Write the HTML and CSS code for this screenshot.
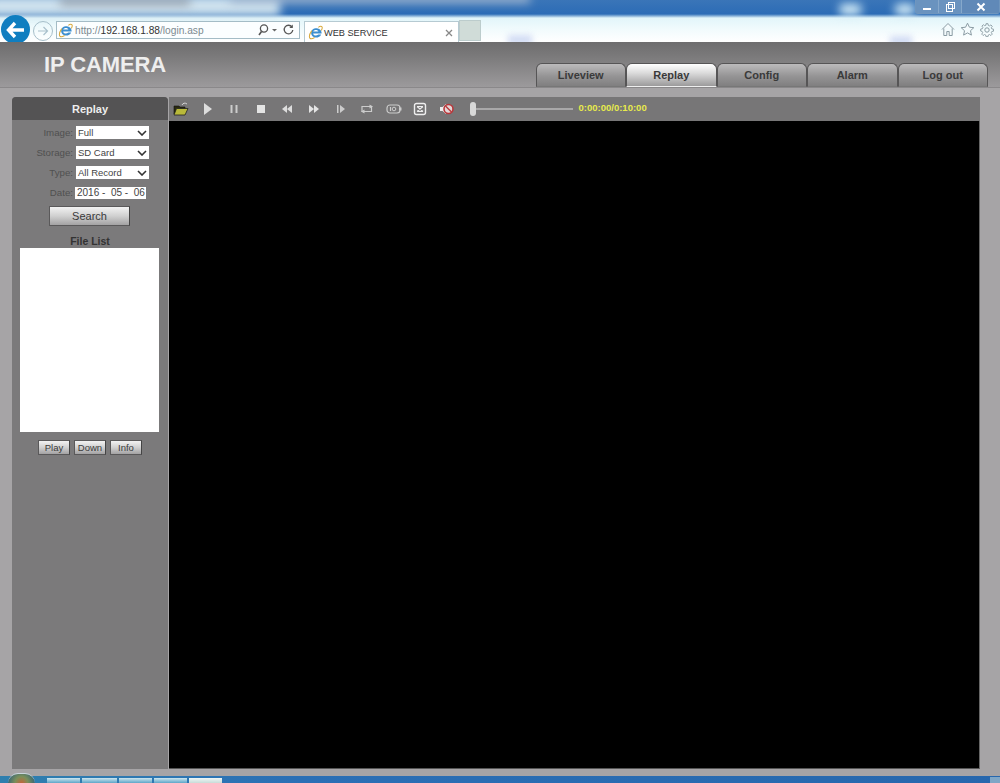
FILE: index.html
```html
<!DOCTYPE html>
<html lang="en">
<head>
  <meta charset="UTF-8">
  <title>WEB SERVICE</title>
  <link rel="stylesheet" href="styles.css">
</head>
<body>
  <div class="browser">
    <div class="blob blob-a"></div>
    <div class="blob blob-b"></div>
    <div class="blob blob-c"></div>
    <div class="blob blob-d"></div>
    <div class="blob blob-e"></div>
    <div class="blob blob-f"></div>
    <div class="window-btns">
      <span class="win-btn min"><svg width="10" height="10" viewBox="0 0 10 10"><rect x="1" y="6" width="8" height="2" fill="#fff"/></svg></span>
      <span class="win-btn restore"><svg width="10" height="10" viewBox="0 0 10 10"><rect x="1.500" y="2.500" width="6" height="7" fill="none" stroke="#fff"/><rect x="3.500" y="0.500" width="6" height="6" fill="none" stroke="#fff"/></svg></span>
      <span class="win-btn close"><svg width="10" height="10" viewBox="0 0 10 10"><path d="M1.500 1.500l7 7M8.500 1.500l-7 7" stroke="#fff" stroke-width="2"/></svg></span>
    </div>
    <div class="navbar">
      <span class="back-btn"><svg width="20" height="18" viewBox="0 0 20 18"><path d="M9 2L2.500 9 9 16M3 9h15" fill="none" stroke="#fff" stroke-width="3.400"/></svg></span>
      <span class="forward-btn"><svg width="12" height="12" viewBox="0 0 12 12"><path d="M6.500 2L10.500 6 6.500 10M10 6H1" fill="none" stroke="#a9c0cc" stroke-width="1.200"/></svg></span>
      <div class="address">
        <svg class="ie-icon" width="15" height="15" viewBox="0 0 16 16"><use href="#ie"/></svg>
        <span class="url"><span class="dim">http://</span>192.168.1.88<span class="dim">/login.asp</span></span>
        <svg class="addr-tools" width="38" height="14" viewBox="0 0 38 14"><circle cx="6" cy="5.500" r="3.600" fill="none" stroke="#555" stroke-width="1.300"/><path d="M3.500 8.500L1 12" stroke="#555" stroke-width="1.600"/><path d="M14 6h5l-2.500 2.500z" fill="#666"/><path d="M34 4a4.300 4.300 0 1 0 .8 3" fill="none" stroke="#555" stroke-width="1.300"/><path d="M34.800 1.500v3.500h-3.500z" fill="#555"/></svg>
      </div>
      <div class="browser-tab">
        <svg class="ie-icon" width="15" height="15" viewBox="0 0 16 16"><use href="#ie"/></svg>
        <span class="tab-title">WEB SERVICE</span>
        <svg width="8" height="8" viewBox="0 0 8 8"><path d="M1 1l6 6M7 1L1 7" stroke="#888" stroke-width="1.300"/></svg>
      </div>
      <div class="new-tab"></div>
      <div class="browser-tools">
        <svg width="14" height="15" viewBox="0 0 14 15"><path d="M1 7.500L7 1.500l6 6M2.800 6.500V13.500h3v-4h2.400v4h3V6.500" fill="#f4fbfd" stroke="#8a9ba3"/></svg>
        <svg width="15" height="15" viewBox="0 0 15 15"><path d="M7.500 1.200l1.900 4 4.400.5-3.300 3 .9 4.400-3.900-2.200-3.900 2.200.9-4.400-3.300-3 4.400-.5z" fill="#f4fbfd" stroke="#8a9ba3"/></svg>
        <svg width="14" height="14" viewBox="0 0 14 14"><circle cx="7" cy="7" r="2.200" fill="none" stroke="#8a9ba3"/><path d="M6 .7h2l.3 1.700 1.200.5 1.400-1 1.400 1.400-1 1.400.5 1.200 1.700.3v2l-1.700.3-.5 1.200 1 1.400-1.400 1.400-1.400-1-1.200.5-.3 1.700H6l-.3-1.700-1.200-.5-1.400 1-1.400-1.400 1-1.400-.5-1.200L.7 8V6l1.700-.3.5-1.200-1-1.400 1.400-1.400 1.400 1 1.200-.5z" fill="none" stroke="#8a9ba3" stroke-width=".9"/></svg>
      </div>
    </div>
  </div>

  <header class="cam-header">
    <h1>IP CAMERA</h1>
    <nav class="tabs">
      <a class="tab">Liveview</a>
      <a class="tab active">Replay</a>
      <a class="tab">Config</a>
      <a class="tab">Alarm</a>
      <a class="tab">Log out</a>
    </nav>
  </header>

  <main class="content">
    <aside class="panel">
      <div class="panel-title">Replay</div>
      <div class="form">
        <div class="form-row">
          <span class="form-label">Image:</span>
          <span class="select">Full<svg width="10" height="6" viewBox="0 0 10 6"><use href="#chev"/></svg></span>
        </div>
        <div class="form-row">
          <span class="form-label">Storage:</span>
          <span class="select">SD Card<svg width="10" height="6" viewBox="0 0 10 6"><use href="#chev"/></svg></span>
        </div>
        <div class="form-row">
          <span class="form-label">Type:</span>
          <span class="select">All Record<svg width="10" height="6" viewBox="0 0 10 6"><use href="#chev"/></svg></span>
        </div>
        <div class="form-row">
          <span class="form-label">Date:</span>
          <span class="date-input">2016 -&nbsp; 05 -&nbsp; 06</span>
        </div>
      </div>
      <button class="btn search-btn">Search</button>
      <div class="list-title">File List</div>
      <div class="file-list"></div>
      <div class="list-actions">
        <button class="btn small-btn">Play</button>
        <button class="btn small-btn">Down</button>
        <button class="btn small-btn">Info</button>
      </div>
    </aside>

    <section class="player">
      <div class="toolbar">
        <svg class="tool" width="16" height="14" viewBox="0 0 16 14"><path d="M1 4h5l1 1h5v2H4L1 12z" fill="#2a2a10" stroke="#111" stroke-width=".6"/><path d="M3.500 6.500H15L12 13H1z" fill="#b9b93a" stroke="#222" stroke-width=".8"/><path d="M9 3c1-2 3-2.500 5-1" fill="none" stroke="#eee" stroke-width=".8"/></svg>
        <svg class="tool" width="16" height="14" viewBox="0 0 16 14"><path d="M4 1l8 6-8 6z" fill="#ddd"/></svg>
        <svg class="tool" width="16" height="14" viewBox="0 0 16 14"><rect x="4.500" y="3" width="2" height="8" fill="#ccc"/><rect x="9.500" y="3" width="2" height="8" fill="#ccc"/></svg>
        <svg class="tool" width="16" height="14" viewBox="0 0 16 14"><rect x="4" y="3" width="8" height="8" fill="#e4e4e4"/></svg>
        <svg class="tool" width="16" height="14" viewBox="0 0 16 14"><path d="M8 3v8L3 7zM13 3v8L8 7z" fill="#ddd"/></svg>
        <svg class="tool" width="16" height="14" viewBox="0 0 16 14"><path d="M3 3v8l5-4zM8 3v8l5-4z" fill="#e4e4e4"/></svg>
        <svg class="tool" width="16" height="14" viewBox="0 0 16 14"><rect x="4" y="3" width="1.500" height="8" fill="#ccc"/><path d="M7 3v8l5-4z" fill="#ccc"/></svg>
        <svg class="tool" width="16" height="14" viewBox="0 0 16 14"><path d="M3 4.500h9.500v5H3z" fill="none" stroke="#ccc" stroke-width="1.200"/><path d="M10.500 2.500l3.500 2-3.500 2zM5.500 7.500L2 9.500l3.500 2z" fill="#ccc"/></svg>
        <svg class="tool" width="16" height="14" viewBox="0 0 16 14"><rect x="1" y="3" width="13" height="8" rx="3" fill="none" stroke="#ccc" stroke-width="1.200"/><path d="M4.500 5v4" stroke="#ccc" stroke-width="1.200"/><circle cx="8" cy="7" r="1.800" fill="none" stroke="#ccc"/><path d="M13 5.500h2.500v3H13" fill="#ccc"/></svg>
        <svg class="tool" width="16" height="14" viewBox="0 0 16 14"><rect x="2.500" y="1.500" width="11" height="11" rx="2" fill="none" stroke="#eee" stroke-width="1.400"/><path d="M5 4.500h6M5 9.500h6M5 4.500l6 5M11 4.500l-6 5" fill="none" stroke="#eee" stroke-width="1.100"/></svg>
        <svg class="tool" width="16" height="14" viewBox="0 0 16 14"><path d="M1 5h2.500L7 2v10L3.500 9H1z" fill="#eee"/><circle cx="9.500" cy="7" r="4.500" fill="#e4d8d8" stroke="#b8383c" stroke-width="1.600"/><path d="M6.500 4l6 6" stroke="#b8383c" stroke-width="1.400"/></svg>
        <div class="slider">
          <span class="slider-thumb"></span>
          <span class="slider-track"></span>
        </div>
        <span class="time">0:00:00/0:10:00</span>
      </div>
      <div class="video"></div>
    </section>
  </main>

  <footer class="taskbar">
    <span class="orb"></span>
    <span class="task-item w33"></span>
    <span class="task-item w35"></span>
    <span class="task-item w33"></span>
    <span class="task-item w33"></span>
    <span class="task-item w33 light"></span>
    <span class="task-end"></span>
  </footer>

  <svg class="defs" width="0" height="0">
    <symbol id="ie" viewBox="0 0 16 16">
      <path d="M14.500 9H5.500c.3 2.400 3.600 3 5.500 1h3c-1.500 4-7.500 4.500-9.800 1.200C2 8 4.500 3.500 8 3.500c3.800 0 6.800 2 6.500 5.500zM5.600 7h5.400C10.700 4.800 6.200 4.800 5.600 7z" fill="#3d8fd0"/>
      <path d="M11 2.500c2-1.500 4-1.500 4.200.3.100 1-.4 2-1 3M4 6C2 9 1 12.500 2 14c1 1.200 3.200.5 5-.7" fill="none" stroke="#d8a93a" stroke-width="1.100"/>
    </symbol>
    <symbol id="chev" viewBox="0 0 10 6">
      <path d="M1 1l4 4 4-4" fill="none" stroke="#333" stroke-width="1.600"/>
    </symbol>
  </svg>
</body>
</html>
```
FILE: styles.css
```css
:root {
  --page-bg: #a6a4a6;
  --panel: #7b7a7b;
  --panel-dark: #545354;
  --toolbar: #777677;
  --label: #505050;
}
html, body {
  margin: 0;
  padding: 0;
}
body {
  display: flex;
  flex-direction: column;
  width: 1000px;
  height: 783px;
  overflow: hidden;
  background: var(--page-bg);
  font-family: "Liberation Sans", Arial, sans-serif;
}
.defs {
  position: absolute;
}

/* BROWSER CHROME */
.browser {
  position: relative;
  height: 42px;
  flex: none;
  overflow: hidden;
  background: linear-gradient(180deg, #3a75b8 0, #2c6cb6 14px, #e2f5fa 18px, #f2fbfd 30px, #ffffff 42px);
}
.blob {
  position: absolute;
  filter: blur(5px);
}
.blob-a {
  left: -10px;
  top: -4px;
  width: 290px;
  height: 20px;
  background: #cfe2ee;
}
.blob-b {
  left: 60px;
  top: -2px;
  width: 130px;
  height: 7px;
  background: #8f99a5;
}
.blob-c {
  left: 230px;
  top: -6px;
  width: 300px;
  height: 9px;
  background: #9fb5cf;
}
.blob-d {
  left: 840px;
  top: 4px;
  width: 90px;
  height: 11px;
  background: radial-gradient(circle at 10% 50%, #d6eef8 12%, transparent 18%), radial-gradient(circle at 72% 50%, #d6eef8 12%, transparent 18%);
}
.blob-e {
  left: 508px;
  top: 35px;
  width: 24px;
  height: 10px;
  background: #d2dcf4;
  filter: blur(3px);
}
.blob-f {
  left: 890px;
  top: 36px;
  width: 22px;
  height: 10px;
  background: #d2dcf4;
  filter: blur(3px);
}
.window-btns {
  position: absolute;
  right: 0;
  top: 0;
  display: flex;
  height: 13px;
  width: 83px;
  border: 1px solid #6f95bd;
  border-top: none;
  border-radius: 0 0 3px 3px;
  background: #6a93bf;
}
.win-btn {
  display: flex;
  align-items: center;
  justify-content: center;
  width: 22px;
  border-right: 1px solid #86a8cb;
}
.win-btn.close {
  flex: 1;
  border-right: none;
  background: #6089b8;
}
.navbar {
  position: absolute;
  left: 0;
  right: 0;
  top: 15px;
  height: 29px;
  display: flex;
  align-items: flex-start;
}
.back-btn {
  display: flex;
  align-items: center;
  justify-content: center;
  flex: none;
  width: 29px;
  height: 29px;
  margin-left: 1px;
  border-radius: 50%;
  background: #0f7ec0;
}
.forward-btn {
  display: flex;
  align-items: center;
  justify-content: center;
  flex: none;
  width: 18px;
  height: 18px;
  margin: 6px 0 0 3px;
  border: 1px solid #a7bfca;
  border-radius: 50%;
}
.address {
  display: flex;
  align-items: center;
  flex: none;
  box-sizing: border-box;
  width: 244px;
  height: 18px;
  margin: 6px 0 0 3px;
  padding: 0 3px 0 1px;
  border: 1px solid #a4bcc6;
  background: #fbfeff;
  font-size: 10.2px;
  color: #333;
}
.url {
  margin-left: 2px;
  flex: 1;
}
.dim {
  color: #7d8a90;
}
.browser-tab {
  display: flex;
  align-items: center;
  flex: none;
  box-sizing: border-box;
  width: 155px;
  height: 22px;
  margin: 6px 0 0 4px;
  padding: 0 5px 0 3px;
  border: 1px solid #b6cad2;
  border-bottom: none;
  background: #fff;
  font-size: 9.2px;
  color: #333;
}
.tab-title {
  margin-left: 1px;
  flex: 1;
}
.new-tab {
  flex: none;
  box-sizing: border-box;
  width: 22px;
  height: 21px;
  margin: 5px 0 0 0;
  border: 1px solid #bccccc;
  background: #d0dcd8;
}
.browser-tools {
  display: flex;
  align-items: center;
  gap: 5px;
  margin: 7px 0 0 auto;
  padding-right: 6px;
}

/* HEADER */
.cam-header {
  display: flex;
  flex: none;
  justify-content: space-between;
  align-items: flex-start;
  box-sizing: border-box;
  height: 46px;
  padding: 0 12px 0 44px;
  border-bottom: 1px solid #8a888a;
  background: linear-gradient(180deg, #6e6d6e 0%, #7a797a 30%, #9c9a9c 100%);
}
h1 {
  margin: 10px 0 0;
  font-size: 22px;
  line-height: 26px;
  letter-spacing: -.1px;
  color: #eee;
}
.tabs {
  display: flex;
  margin-top: 21px;
}
.tab {
  display: flex;
  align-items: center;
  justify-content: center;
  box-sizing: border-box;
  width: 90.5px;
  height: 24px;
  border: 1px solid #565556;
  border-bottom-color: #777;
  border-radius: 6px 6px 0 0;
  background: linear-gradient(180deg, #bcbbbc 0%, #959495 55%, #807f80 100%);
  font-size: 11px;
  font-weight: bold;
  color: #3a3a3a;
}
.tab.active {
  border-bottom-color: #eee;
  background: linear-gradient(180deg, #ffffff 0%, #dcdcdc 40%, #9b9a9b 100%);
}

/* MAIN */
.content {
  display: flex;
  flex: none;
  height: 672px;
  margin: 9px 20px 7px 12px;
  gap: 1px;
}
.panel {
  display: flex;
  flex-direction: column;
  align-items: center;
  flex: none;
  width: 156px;
  border-radius: 4px 4px 0 0;
  background: var(--panel);
}
.panel-title {
  align-self: stretch;
  height: 23px;
  line-height: 24px;
  border-radius: 4px 4px 0 0;
  background: var(--panel-dark);
  text-align: center;
  font-size: 11px;
  font-weight: bold;
  color: #eee;
}
.form {
  display: flex;
  flex-direction: column;
  align-self: stretch;
  gap: 7px;
  padding-top: 6px;
}
.form-row {
  display: flex;
  align-items: center;
  height: 13px;
  gap: 3px;
}
.form-label {
  width: 61px;
  text-align: right;
  font-size: 9.7px;
  color: var(--label);
}
.select {
  display: flex;
  align-items: center;
  justify-content: space-between;
  box-sizing: border-box;
  width: 73px;
  height: 13px;
  padding: 0 2px;
  background: #fff;
  font-size: 9.5px;
  color: #444;
}
.date-input {
  box-sizing: border-box;
  width: 71px;
  height: 12px;
  line-height: 12px;
  margin-left: -1px;
  padding-left: 2px;
  background: #fff;
  font-size: 10px;
  white-space: nowrap;
  color: #444;
}
.btn {
  padding: 0;
  border: 1px solid #5a595a;
  border-right-color: #444;
  background: linear-gradient(180deg, #f2f2f2 0%, #d0d0d0 50%, #a3a2a3 100%);
  font-family: inherit;
  font-size: 11px;
  color: #3a3a3a;
}
.search-btn {
  width: 81px;
  height: 20px;
  margin: 7px 1px 0 0;
}
.list-title {
  margin-top: 9px;
  height: 13px;
  line-height: 13px;
  font-size: 10.5px;
  font-weight: bold;
  color: #333;
}
.file-list {
  width: 139px;
  height: 184px;
  margin-right: 1px;
  background: #fff;
}
.list-actions {
  display: flex;
  gap: 4px;
  margin-top: 8px;
}
.small-btn {
  width: 32px;
  height: 15px;
  font-size: 9.5px;
  line-height: 13px;
}

/* PLAYER */
.player {
  display: flex;
  flex-direction: column;
  flex: 1;
}
.toolbar {
  display: flex;
  align-items: center;
  flex: none;
  gap: 10.6px;
  height: 24px;
  padding-left: 4px;
  background: var(--toolbar);
}
.tool {
  flex: none;
  filter: blur(.3px);
}
.slider {
  display: flex;
  align-items: center;
  margin-left: 4px;
}
.slider-thumb {
  width: 6px;
  height: 14px;
  border-radius: 3px;
  background: #d8d8d8;
}
.slider-track {
  width: 97px;
  height: 2px;
  background: #a9a8a9;
}
.time {
  margin-left: -4.6px;
  margin-top: -3px;
  font-size: 9.5px;
  font-weight: bold;
  color: #e8ea4c;
}
.video {
  flex: 1;
  background: #000;
  border-bottom: 1px solid #555;
  border-right: 1px solid #666;
}

/* TASKBAR */
.taskbar {
  display: flex;
  align-items: flex-end;
  flex: none;
  position: relative;
  height: 7px;
  padding-left: 8px;
  background: linear-gradient(90deg, #2f7fae 0, #2b6fb5 30%, #2767ad 100%);
}
.orb {
  flex: none;
  width: 27px;
  height: 9px;
  margin-right: 12px;
  border-radius: 14px 14px 0 0;
  border-top: 1px solid #c9d5dc;
  background: radial-gradient(circle at 50% 100%, #c0653a 0, #7a8f5a 40%, #23577d 100%);
}
.task-item {
  flex: none;
  height: 5px;
  margin-right: 2px;
  background: linear-gradient(180deg, #cfe6ef, #5da6c8);
}
.w33 {
  width: 33px;
}
.w35 {
  width: 35px;
}
.task-item.light {
  background: linear-gradient(180deg, #f0f6f6, #c8dcd8);
}
.task-end {
  margin-left: auto;
  width: 10px;
  height: 6px;
  background: #7fa6c6;
}
```
